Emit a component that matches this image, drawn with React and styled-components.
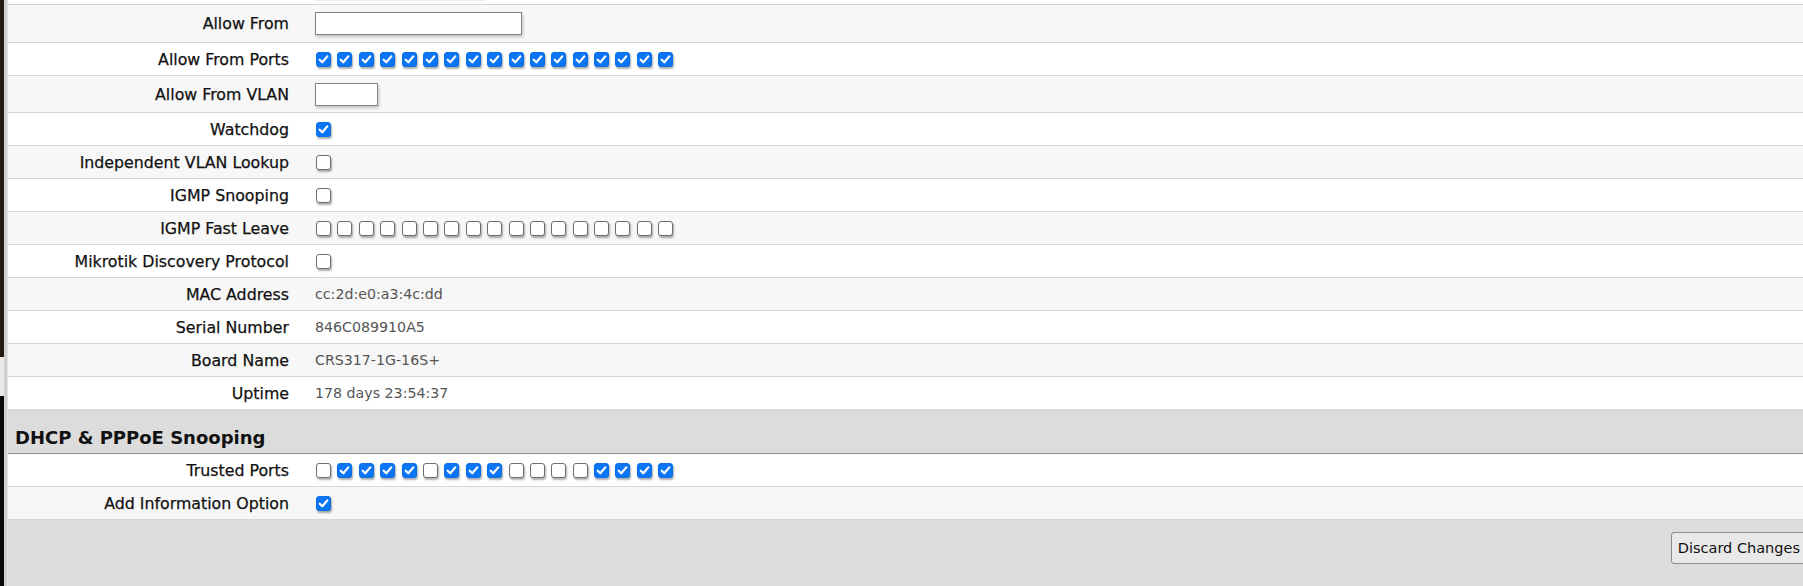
import { createGlobalStyle, styled } from "styled-components";

const GlobalStyle = createGlobalStyle`
  html, body {
    margin: 0;
    padding: 0;
    background: #dcdcdc;
    overflow: hidden;
  }
  body {
    font-family: "DejaVu Sans", Verdana, sans-serif;
  }
`;

const allOn = Array(17).fill(true);
const allOff = Array(17).fill(false);
const trusted = [0, 1, 1, 1, 1, 0, 1, 1, 1, 0, 0, 0, 0, 1, 1, 1, 1].map(Boolean);

const general = [
  { label: "Allow From", input: 207, h: 37 },
  { label: "Allow From Ports", checks: allOn },
  { label: "Allow From VLAN", input: 63, h: 36 },
  { label: "Watchdog", checks: [true] },
  { label: "Independent VLAN Lookup", checks: [false] },
  { label: "IGMP Snooping", checks: [false] },
  { label: "IGMP Fast Leave", checks: allOff },
  { label: "Mikrotik Discovery Protocol", checks: [false] },
  { label: "MAC Address", text: "cc:2d:e0:a3:4c:dd" },
  { label: "Serial Number", text: "846C089910A5" },
  { label: "Board Name", text: "CRS317-1G-16S+" },
  { label: "Uptime", text: "178 days 23:54:37" },
];

const snooping = [
  { label: "Trusted Ports", checks: trusted },
  { label: "Add Information Option", checks: [true] },
];

const CheckMark = () => (
  <svg width="15" height="15" viewBox="0 0 15 15">
    <path
      d="M3.7 7.7 L6.3 10.3 L11.3 4.4"
      fill="none"
      stroke="#fff"
      strokeWidth="2.2"
      strokeLinecap="round"
      strokeLinejoin="round"
    />
  </svg>
);

const Value = ({ row }) => {
  if (row.input) return <TextInput $w={row.input} />;
  if (row.checks)
    return (
      <Checks>
        {row.checks.map((on, i) => (
          <Box key={i} $on={on}>
            {on && <CheckMark />}
          </Box>
        ))}
      </Checks>
    );
  return <Text>{row.text}</Text>;
};

const Table = ({ rows, offset = 0 }) => (
  <div>
    {rows.map((row, i) => (
      <Row key={row.label} $alt={(i + offset) % 2 === 1} $h={row.h}>
        <Label>{row.label}</Label>
        <Value row={row} />
      </Row>
    ))}
  </div>
);

const App = () => {
  return (
    <Page>
      <GlobalStyle />
      <Edge>
        <EdgeStrip>
          <EdgePart $h={357} $c="#221a13" />
          <EdgePart $h={39} $c="#e8e8e8" />
          <EdgePart $h={190} $c="#0b0b0b" />
        </EdgeStrip>
        <EdgeLine />
      </Edge>

      <Main>
        <StubRow>
          <span />
          <StubTail />
        </StubRow>
        <Table rows={general} offset={1} />

        <SectionTitle>DHCP &amp; PPPoE Snooping</SectionTitle>
        <Table rows={snooping} />

        <Footer>
          <Button>Discard Changes</Button>
        </Footer>
      </Main>
    </Page>
  );
};

const Page = styled.div`
  display: flex;
  width: 1811px;
  min-height: 586px;
`;

const Edge = styled.div`
  display: flex;
  flex-shrink: 0;
`;

const EdgeStrip = styled.div`
  width: 4px;
  display: flex;
  flex-direction: column;
`;

const EdgePart = styled.div`
  height: ${(p) => p.$h}px;
  background: ${(p) => p.$c};
`;

const EdgeLine = styled.div`
  width: 4px;
  background: linear-gradient(to right, #cfcfcf 0 3px, #e2e2e2 3px);
`;

const Main = styled.div`
  flex: 1;
  min-width: 0;
  display: flex;
  flex-direction: column;
`;

const Row = styled.div`
  display: grid;
  grid-template-columns: 281px 1fr;
  column-gap: 26px;
  align-items: center;
  height: ${(p) => p.$h || 32}px;
  background: ${(p) => (p.$alt ? "#f7f7f7" : "#ffffff")};
  border-bottom: 1px solid #d6d6d6;
`;

const StubRow = styled(Row)`
  height: 4px;
  align-items: start;
  overflow: hidden;
`;

const StubTail = styled.div`
  width: 170px;
  height: 1px;
  background: #ececec;
`;

const Label = styled.div`
  text-align: right;
  font-size: 15.8px;
  color: #111;
  -webkit-text-stroke: 0.25px #111;
  white-space: nowrap;
`;

const Text = styled.div`
  font-size: 14.2px;
  color: #555;
  white-space: nowrap;
`;

const TextInput = styled.input.attrs({ type: "text" })`
  box-sizing: border-box;
  width: ${(p) => p.$w}px;
  height: 23px;
  margin: 0;
  padding: 0 4px;
  background: #fff;
  border: 1px solid #858585;
  border-radius: 0;
  box-shadow: 1px 2px 3px rgba(0, 0, 0, 0.22);
  outline: none;
`;

const Checks = styled.div`
  display: flex;
  gap: 6.4px;
  padding-left: 1px;
`;

const Box = styled.span`
  box-sizing: border-box;
  width: 15px;
  height: 15px;
  display: flex;
  border-radius: 3px;
  background: ${(p) => (p.$on ? "#0a75f5" : "#ffffff")};
  border: 1px solid ${(p) => (p.$on ? "#0a6ee6" : "#6e6e6e")};
  box-shadow: 1px 2px 2px rgba(0, 0, 0, 0.32);
  svg {
    margin: -1px;
  }
`;

const SectionTitle = styled.h2`
  margin: 0;
  padding: 17px 7px 4px;
  font-size: 18px;
  line-height: 22px;
  font-weight: bold;
  color: #111;
  background: #dcdcdc;
  border-bottom: 1px solid #8f8f8f;
`;

const Footer = styled.div`
  display: flex;
  justify-content: flex-end;
  padding: 12px 4px 0 0;
`;

const Button = styled.button`
  height: 32px;
  padding: 0 6px;
  font-family: "DejaVu Sans", Verdana, sans-serif;
  font-size: 14.5px;
  color: #111;
  background: #e9e9e9;
  border: 1px solid #8c8c8c;
  border-radius: 3px;
`;

export default App;
